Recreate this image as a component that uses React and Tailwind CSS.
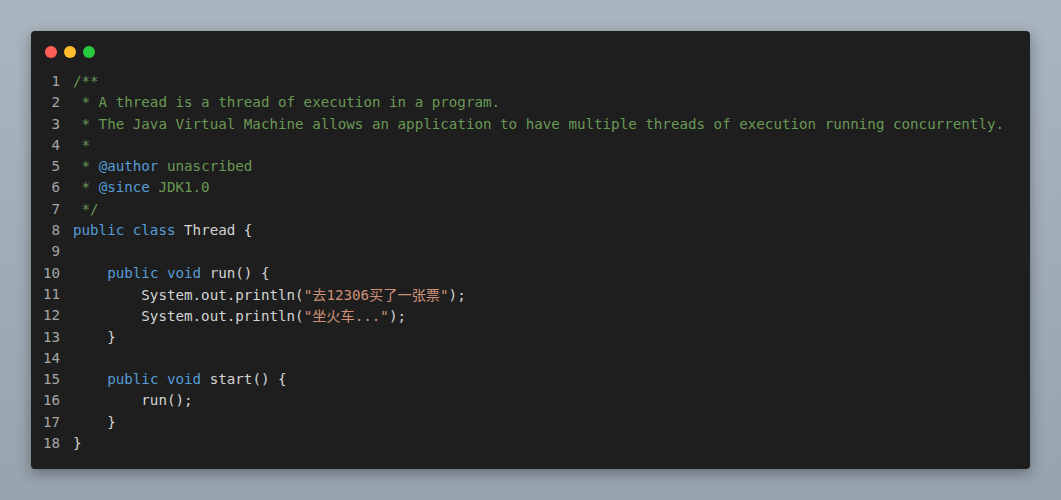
const MONO = "font-['DejaVu_Sans_Mono','Liberation_Mono',monospace]"

// token colours
const C = {
  cm: 'text-[#6a9955]',
  kw: 'text-[#569cd6]',
  tx: 'text-[#d4d4d4]',
  st: 'text-[#ce9178]',
}

// each line is a list of [colour, text] pairs
const LINES = [
  [['cm', '/**']],
  [['cm', ' * A thread is a thread of execution in a program.']],
  [['cm', ' * The Java Virtual Machine allows an application to have multiple threads of execution running concurrently.']],
  [['cm', ' *']],
  [['cm', ' * '], ['kw', '@author'], ['cm', ' unascribed']],
  [['cm', ' * '], ['kw', '@since'], ['cm', ' JDK1.0']],
  [['cm', ' */']],
  [['kw', 'public class '], ['tx', 'Thread {']],
  [],
  [['tx', '    '], ['kw', 'public void '], ['tx', 'run() {']],
  [['tx', '        System.out.println('], ['st', '"'], ['cjk', '去'], ['st', '12306'], ['cjk', '买了一张票'], ['st', '"'], ['tx', ');']],
  [['tx', '        System.out.println('], ['st', '"'], ['cjk', '坐火车'], ['st', '..."'], ['tx', ');']],
  [['tx', '    }']],
  [],
  [['tx', '    '], ['kw', 'public void '], ['tx', 'start() {']],
  [['tx', '        run();']],
  [['tx', '    }']],
  [['tx', '}']],
]

function Token({ kind, text }) {
  if (kind === 'cjk') {
    return (
      <span className="text-[#ce9178] font-['Noto_Sans_CJK_SC',sans-serif]">
        {text}
      </span>
    )
  }
  return <span className={C[kind]}>{text}</span>
}

export default function App() {
  return (
    <div className="min-h-[500px] w-full bg-gradient-to-b from-[#a9b5bf] to-[#97a3ad] p-[31px]">
      <div className="h-[438px] rounded-[4px] bg-[#1e1e1e] shadow-[0_4px_14px_rgba(0,0,0,0.35)] overflow-hidden">

        {/* window controls */}
        <div className="flex gap-[7px] pl-[14px] pt-[15px]">
          <span className="w-[12px] h-[12px] rounded-full bg-[#ff5f56]" />
          <span className="w-[12px] h-[12px] rounded-full bg-[#ffbd2e]" />
          <span className="w-[12px] h-[12px] rounded-full bg-[#27c93f]" />
        </div>

        {/* code */}
        <div className={`pt-[13px] pl-[12px] ${MONO} text-[14.2px] leading-[21.3px]`}>
          {LINES.map((line, i) => (
            <div key={i} className="flex h-[21.3px]">
              <span className="w-[17px] shrink-0 text-right text-[#a6a6a6]">{i + 1}</span>
              <span className="ml-[13px] whitespace-pre">
                {line.map(([k, t], j) => <Token key={j} kind={k} text={t} />)}
              </span>
            </div>
          ))}
        </div>

      </div>
    </div>
  )
}
